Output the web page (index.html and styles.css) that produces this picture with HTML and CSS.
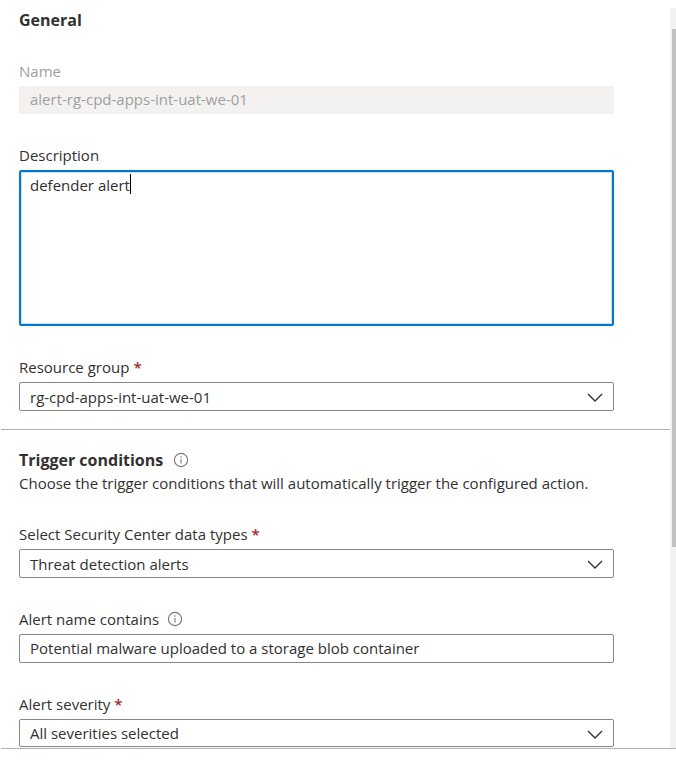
FILE: index.html
```html
<!DOCTYPE html>
<html lang="en">
<head>
<meta charset="utf-8">
<title>Workflow automation</title>
<link rel="stylesheet" href="styles.css">
</head>
<body>
<div class="panel">
  <form class="form">
    <section class="section">
      <h2 class="heading">General</h2>
      <div class="fields">
        <div class="field field-disabled">
          <label class="label" for="name">Name</label>
          <input class="control text" id="name" type="text" value="alert-rg-cpd-apps-int-uat-we-01" disabled>
        </div>
        <div class="field">
          <label class="label" for="description">Description</label>
          <div class="control-wrap">
            <textarea class="control area" id="description">defender alert</textarea>
            <span class="caret"></span>
          </div>
        </div>
        <div class="field">
          <label class="label" for="group">Resource group <span class="required">*</span></label>
          <div class="control-wrap">
            <select class="control" id="group"><option>rg-cpd-apps-int-uat-we-01</option></select>
            <svg class="chevron" viewBox="0 0 16 10"><path d="M1 1l7 7 7-7"/></svg>
          </div>
        </div>
      </div>
    </section>
    <section class="section">
      <h2 class="heading">Trigger conditions
        <svg class="info" viewBox="0 0 16 16"><circle cx="8" cy="8" r="6.6"/><path d="M8 7v4.5M8 4.3v1.4"/></svg>
      </h2>
      <p class="intro">Choose the trigger conditions that will automatically trigger the configured action.</p>
      <div class="fields">
        <div class="field">
          <label class="label" for="types">Select Security Center data types <span class="required">*</span></label>
          <div class="control-wrap">
            <select class="control" id="types"><option>Threat detection alerts</option></select>
            <svg class="chevron" viewBox="0 0 16 10"><path d="M1 1l7 7 7-7"/></svg>
          </div>
        </div>
        <div class="field">
          <label class="label" for="contains">Alert name contains
            <svg class="info" viewBox="0 0 16 16"><circle cx="8" cy="8" r="6.6"/><path d="M8 7v4.5M8 4.3v1.4"/></svg>
          </label>
          <input class="control text" id="contains" type="text" value="Potential malware uploaded to a storage blob container">
        </div>
        <div class="field">
          <label class="label" for="severity">Alert severity <span class="required">*</span></label>
          <div class="control-wrap">
            <select class="control control-last" id="severity"><option>All severities selected</option></select>
            <svg class="chevron" viewBox="0 0 16 10"><path d="M1 1l7 7 7-7"/></svg>
          </div>
        </div>
      </div>
    </section>
  </form>
  <div class="track"><div class="thumb"></div></div>
</div>
</body>
</html>
```
FILE: styles.css
```css
* {
  box-sizing: border-box;
}

body {
  margin: 0;
  padding: 8px 0 0 1px;
  background: #fff;
  color: #323130;
  font: 15px/20px "Open Sans", "Noto Sans", sans-serif;
}

.panel {
  display: flex;
  border-bottom: 1px solid #b3b0ad;
}

.form {
  flex: 1;
  min-width: 0;
}

.section {
  padding: 0 56px 18px 18px;
}

.section + .section {
  padding-top: 18px;
  padding-bottom: 1px;
  border-top: 1px solid #b3b0ad;
}

.heading {
  display: flex;
  align-items: center;
  gap: 10px;
  margin: 0;
  font-size: 16px;
  line-height: 24px;
  font-weight: 700;
}

.intro {
  margin: 0;
  line-height: 23px;
}

.fields {
  display: flex;
  flex-direction: column;
  gap: 32px;
  margin-top: 30px;
}

.field {
  display: flex;
  flex-direction: column;
  gap: 6px;
}

.label {
  display: flex;
  align-items: center;
  gap: 4px;
  line-height: 18px;
}

.label .info {
  margin-left: 4px;
}

.required {
  color: #a4262c;
  font-weight: 600;
}

.control-wrap {
  position: relative;
  display: grid;
}

.control {
  display: block;
  width: 100%;
  height: 29px;
  margin: 0;
  padding: 0 10px;
  border: 1px solid #8a8886;
  border-radius: 2px;
  background: #fff;
  color: inherit;
  font: inherit;
  appearance: none;
  outline: none;
}

.control-last {
  height: 28px;
}

.text {
  padding-bottom: 2px;
}

.field-disabled {
  color: #a19f9d;
}

.field-disabled .control {
  height: 28px;
  border-color: #f3f2f1;
  background: #f3f2f1;
}

.area {
  height: 156px;
  padding: 3px 9px;
  border: 2px solid #0078d4;
  box-shadow: inset 0 0 0 1px #c7e0f4;
  line-height: 20px;
  resize: none;
}

.caret {
  position: absolute;
  top: 4px;
  left: 111px;
  width: 1px;
  height: 20px;
  background: #000;
}

.chevron {
  position: absolute;
  top: 11px;
  right: 11px;
  width: 16px;
  height: 10px;
  fill: none;
  stroke: #323130;
  stroke-width: 1.4;
  pointer-events: none;
}

.info {
  width: 16px;
  height: 16px;
  fill: none;
  stroke: #797775;
  stroke-width: 1.1;
}

.track {
  display: flex;
  flex-direction: column;
  width: 6px;
  padding: 21px 0 0 2px;
  background: #f1f1f1;
}

.thumb {
  flex: 0 0 72%;
  background: #c1c1c1;
}
```
